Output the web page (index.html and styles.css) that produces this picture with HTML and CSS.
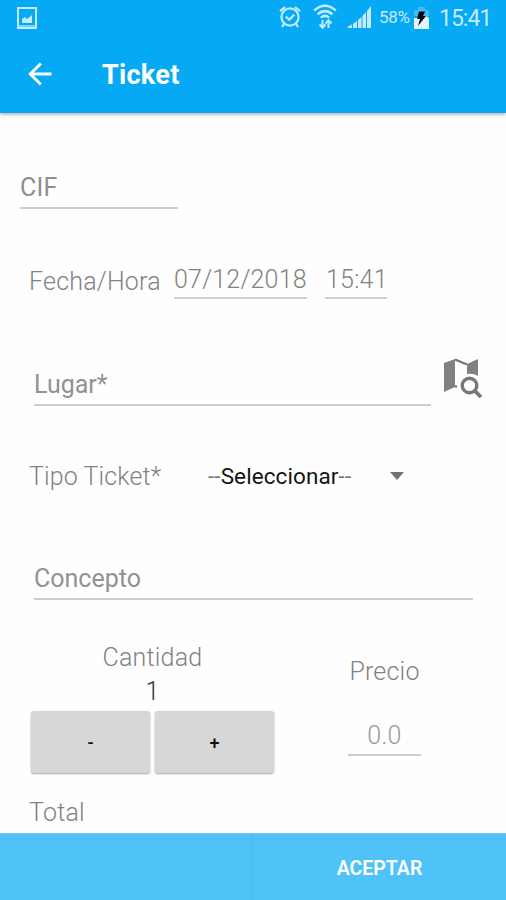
FILE: index.html
```html
<!DOCTYPE html>
<html lang="es">
<head>
<meta charset="utf-8">
<title>Ticket</title>
<link rel="stylesheet" href="styles.css">
</head>
<body>
<div class="screen">
  <header class="header">
    <div class="status">
      <svg class="status-picture" width="20" height="22" viewBox="0 0 20 22"><path d="M1 1h18v20H1z" fill="none" stroke="currentColor" stroke-width="2"/><path d="M2 18h16v2H2z" fill="currentColor" opacity=".6"/><path d="M5 16v-4l3-2 2 2 5-4v8z" fill="currentColor"/></svg>
      <div class="status-right">
        <svg class="alarm" width="22" height="24" viewBox="0 0 22 24" fill="none" stroke="currentColor" stroke-width="2.2"><circle cx="11" cy="12" r="8.6"/><path d="M6.8 11.5l3.3 3.3 5.2-5.2M1 6.200L6 2M21 6.200L16 2M5.5 18.2L3 22M16.5 18.2l2.5 3.800"/></svg>
        <svg class="wifi" width="24" height="26" viewBox="0 0 24 26" fill="none" stroke="currentColor" stroke-width="2.5"><path d="M1.2 6.5Q12-3 22.8 6.5M4.5 10.2Q12 4 19.500 10.200M7.800 13.600Q12 10.200 16.200 13.600"/><path d="M9.500 16v7M6.500 20.500l3 3.300 3-3.300M15.500 24v-7M12.500 19.500l3-3.300 3 3.300" stroke-width="2"/></svg>
        <svg class="signal" width="24" height="23" viewBox="0 0 24 23" fill="currentColor"><path d="M0 20.500l4-2V22H0zM5 18l4-3v7H5z"/><path d="M10 14l3.500-3v11H10zM14.500 10l3.500-4v16h-3.500zM19 5l4-5v22h-4z"/></svg>
        <span class="percent">58%</span>
        <svg class="battery" width="15" height="22" viewBox="0 0 15 22"><path d="M4 0h7v3h4v6H0V3h4z" fill="#43b9f5"/><path d="M0 11h3l3-2h6l3 2v11H0z" fill="#e2f5fe"/><path d="M5 4.500h6L9 9h3L4 19l2-7H3z" fill="#080b0d"/></svg>
        <span class="clock">15:41</span>
      </div>
    </div>
    <div class="toolbar">
      <svg class="back" width="24" height="24" viewBox="0 0 24 24" fill="none" stroke="currentColor" stroke-width="2.900"><path d="M23.500 12H2.500M12.800 1.500L2.300 12l10.500 10.500"/></svg>
      <h1 class="title">Ticket</h1>
    </div>
  </header>
  <main class="form">
    <div class="field cif"><span>CIF</span></div>
    <div class="date-row">
      <span class="label date-label">Fecha/Hora</span>
      <div class="field date"><span>07/12/2018</span></div>
      <div class="field time"><span>15:41</span></div>
    </div>
    <div class="place-row">
      <div class="field place"><span>Lugar*</span></div>
      <svg class="map" width="40" height="42" viewBox="0 0 40 42"><path d="M1 5l11-4v28L1 34z" fill="#818181"/><path d="M12 1.500l12 5M12 28l2 1" fill="none" stroke="#777" stroke-width="2.400"/><path d="M24 6L35 1v17q-5-3-11-2z" fill="#818181"/><circle cx="26.500" cy="27.500" r="7.300" fill="none" stroke="#777" stroke-width="3.400"/><path d="M31.500 32.500l6.500 6.500" stroke="#777" stroke-width="3.800"/></svg>
    </div>
    <div class="type-row">
      <span class="label type-label">Tipo Ticket*</span>
      <span class="select"><i>--</i>Seleccionar<i>--</i></span>
      <svg class="caret" width="14" height="8" viewBox="0 0 14 8"><path d="M0 0h14L7 8z" fill="#737373"/></svg>
    </div>
    <div class="field concept"><span>Concepto</span></div>
    <div class="amounts">
      <div class="quantity">
        <span class="label quantity-label">Cantidad</span>
        <span class="label quantity-value">1</span>
        <div class="buttons"><button class="step">-</button><button class="step">+</button></div>
      </div>
      <div class="price">
        <span class="label price-label">Precio</span>
        <div class="field price-field"><span>0.0</span></div>
      </div>
    </div>
    <div class="label total"><span>Total</span></div>
  </main>
  <footer class="footer">
    <div class="footer-cell"></div>
    <div class="footer-cell accept"><span>ACEPTAR</span></div>
  </footer>
</div>
</body>
</html>
```
FILE: styles.css
```css
* { box-sizing: border-box; }
body { margin: 0; font-family: Roboto, sans-serif; background: #fefefe; }
svg { display: block; flex: none; }
.screen { width: 506px; height: 900px; display: flex; flex-direction: column; overflow: hidden; }
.header { height: 113px; flex: none; background: #05a9f4; color: #fff; box-shadow: 0 1px 4px rgba(0,0,0,.4); }
.status { height: 36px; display: flex; justify-content: space-between; align-items: flex-start; padding: 0 15px 0 17px; color: #c4ebfd; }
.status-picture { margin-top: 7px; }
.status-right { display: flex; align-items: flex-start; }
.alarm { margin: 5px 12px 0 0; }
.wifi { margin: 4px 11px 0 0; }
.signal { margin: 6px 7px 0 0; }
.percent { width: 35px; font-size: 17px; line-height: 35px; letter-spacing: -.3px; }
.battery { margin: 7px 10px 0 0; }
.clock { width: 52px; font-size: 23px; line-height: 37px; letter-spacing: -1px; white-space: nowrap; }
.toolbar { height: 77px; display: flex; align-items: center; padding-left: 28px; }
.back { margin-top: -2px; }
.title { margin: 1px 0 0 50px; font-size: 27px; line-height: 34px; font-weight: 700; letter-spacing: .3px; }
.form { flex: 1; min-height: 0; padding-top: 60px; color: #828282; font-size: 25px; line-height: 30px; font-weight: 300; letter-spacing: .2px; }
.label, .field { white-space: nowrap; }
.field { height: 36px; border-bottom: 2px solid #cdcdcd; }
.cif { width: 158px; margin-left: 20px; font-weight: 400; color: #8f8f8f; }
.date-row { display: flex; margin: 56px 0 0 29px; height: 34px; }
.date-label { width: 145px; padding-top: 2px; }
.date { width: 133px; height: 34px; }
.time { width: 62px; height: 34px; margin-left: 18px; padding-left: 1px; }
.place-row { display: flex; margin: 58px 0 0 34px; height: 49px; align-items: flex-start; }
.place { width: 397px; margin-top: 13px; font-size: 25px; font-weight: 400; letter-spacing: 0; color: #929292; }
.map { margin: 1px 0 0 12px; }
.type-row { display: flex; margin: 55px 0 0 29px; align-items: center; }
.type-label { width: 179px; padding-top: 1px; letter-spacing: .1px; }
.select { width: 182px; margin-top: -2px; color: #151515; font-size: 22.500px; font-weight: 400; letter-spacing: .1px; white-space: nowrap; }
.select i { color: #777; font-style: normal; }
.caret { margin-top: -2px; }
.concept { width: 439px; margin: 72px 0 0 34px; font-size: 25px; font-weight: 400; letter-spacing: 0; color: #929292; }
.amounts { display: flex; margin-top: 43px; padding-left: 31px; }
.quantity { width: 243px; display: flex; flex-direction: column; align-items: center; }
.quantity-value { margin-top: 4px; color: #333; }
.buttons { display: flex; gap: 5px; margin-top: 4px; }
.step { width: 119px; height: 62px; padding: 0; border: 0; border-radius: 3px; background: #d6d8d7; box-shadow: 0 1px 2px rgba(0,0,0,.35); font: 500 18px Roboto, sans-serif; color: #111; }
.price { width: 73px; margin: 14px 0 0 74px; display: flex; flex-direction: column; align-items: center; }
.price-field { width: 73px; height: 35px; margin-top: 34px; text-align: center; color: #999; }
.total { margin: 25px 0 0 29px; }
.footer { height: 67px; flex: none; display: flex; background: #4fc3f7; border-top: 1px solid #72c9ee; }
.footer-cell { flex: 1 1 0; }
.footer-cell.accept { flex: none; width: 254px; padding: 2px 0 0; display: flex; align-items: center; justify-content: center; border-left: 1px solid #46b9ed; color: #fff; font-size: 19.500px; font-weight: 600; }
```
